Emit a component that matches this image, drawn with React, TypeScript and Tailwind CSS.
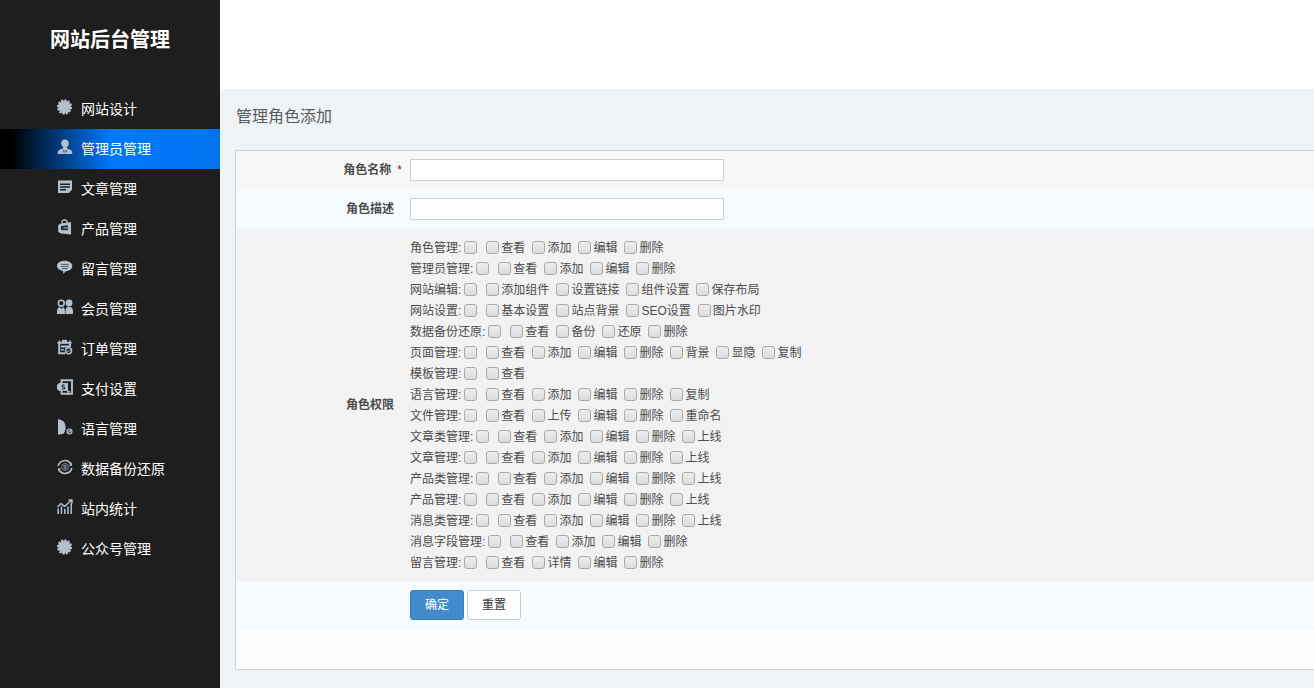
import type { ReactNode } from "react";

const menu = [
  { name: "网站设计", icon: "badge" },
  { name: "管理员管理", icon: "admin", active: true },
  { name: "文章管理", icon: "article" },
  { name: "产品管理", icon: "bag" },
  { name: "留言管理", icon: "message" },
  { name: "会员管理", icon: "members" },
  { name: "订单管理", icon: "order" },
  { name: "支付设置", icon: "pay" },
  { name: "语言管理", icon: "language" },
  { name: "数据备份还原", icon: "backup" },
  { name: "站内统计", icon: "stats" },
  { name: "公众号管理", icon: "badge" },
];

const permissions = [
  { name: "角色管理", items: ["查看", "添加", "编辑", "删除"] },
  { name: "管理员管理", items: ["查看", "添加", "编辑", "删除"] },
  { name: "网站编辑", items: ["添加组件", "设置链接", "组件设置", "保存布局"] },
  { name: "网站设置", items: ["基本设置", "站点背景", "SEO设置", "图片水印"] },
  { name: "数据备份还原", items: ["查看", "备份", "还原", "删除"] },
  { name: "页面管理", items: ["查看", "添加", "编辑", "删除", "背景", "显隐", "复制"] },
  { name: "模板管理", items: ["查看"] },
  { name: "语言管理", items: ["查看", "添加", "编辑", "删除", "复制"] },
  { name: "文件管理", items: ["查看", "上传", "编辑", "删除", "重命名"] },
  { name: "文章类管理", items: ["查看", "添加", "编辑", "删除", "上线"] },
  { name: "文章管理", items: ["查看", "添加", "编辑", "删除", "上线"] },
  { name: "产品类管理", items: ["查看", "添加", "编辑", "删除", "上线"] },
  { name: "产品管理", items: ["查看", "添加", "编辑", "删除", "上线"] },
  { name: "消息类管理", items: ["查看", "添加", "编辑", "删除", "上线"] },
  { name: "消息字段管理", items: ["查看", "添加", "编辑", "删除"] },
  { name: "留言管理", items: ["查看", "详情", "编辑", "删除"] },
];

const icons: Record<string, ReactNode> = {
  badge: (
    <>
      <circle cx="7.5" cy="8" r="6.5" fill="currentColor" />
      <circle cx="7.5" cy="8" r="6.8" fill="none" stroke="currentColor" strokeWidth="1.8" pathLength="24" strokeDasharray="1.2 0.8" />
    </>
  ),
  admin: (
    <>
      <path fill="currentColor" d="M8 .5c2.200 0 3.800 1.500 3.800 3.800 0 1.600-.8 3-2 3.800l.4 1.400c1.300.7 4.500 1.200 4.900 3.200.2.800.2 1.500.2 2.300H.7c0-.8 0-1.500.2-2.300.4-2 3.600-2.500 4.900-3.200l.4-1.400c-1.200-.8-2-2.200-2-3.800C4.200 2 5.800.5 8 .5z" />
      <path fill="#0a60bd" d="m5.600 10.200 2.100 1.600-.6 2.800zM10.400 10.200l-2.100 1.600.6 2.800z" />
    </>
  ),
  article: (
    <>
      <path fill="currentColor" d="M1 1.500h14v9.300l-3.200 3.200H1z" />
      <path stroke="#1e1e1e" strokeWidth="1.400" d="M3 5.200h10M3 8h10M3 10.800h6" />
    </>
  ),
  bag: (
    <>
      <path fill="none" stroke="currentColor" strokeWidth="1.300" d="M5 5V3q0-2 2.500-2T10 3v1.500" />
      <path fill="currentColor" d="M1.200 6 4 4.500l10-1.500v12.500L4 14.500l-2.800-1.500z" />
      <path fill="#1e2a35" d="M4 7 11 6.300v5L4 11z" />
      <path fill="#65737f" d="M6.500 8H11v2H6.500z" />
    </>
  ),
  message: (
    <>
      <path fill="currentColor" d="M7.500 1.800C11.800 1.800 15.300 4 15.300 7s-3 5-6.500 5.300L6.200 15v-3C2.800 11.500 0 9.600 0 7c0-3 3.200-5.200 7.500-5.200z" />
      <path stroke="#5b656e" strokeWidth="1" d="M4 5.500h7.500M4 7.500h7.500M5 9.500h5.500" />
    </>
  ),
  members: (
    <>
      <circle cx="4.300" cy="4.200" r="2.900" fill="none" stroke="currentColor" strokeWidth="1.600" />
      <circle cx="12" cy="4" r="3.400" fill="currentColor" />
      <path fill="currentColor" d="M0 15c0-4 0-5.800 2.700-7l1.600 2L6 8c2 .8 2 3.500 2 7zM8.500 15c0-4 0-6 1.800-7h3.400C16 9 16 11.500 16 15z" />
    </>
  ),
  order: (
    <>
      <path fill="none" stroke="currentColor" strokeWidth="2" d="M.5 3.800h14M2.200 4v10.200H8M13 4v4M4 7.500h8" />
      <path stroke="currentColor" strokeWidth="1.400" d="M4 10.800h3" />
      <path fill="currentColor" d="M5 .8h5v3.700H5z" />
      <path stroke="currentColor" strokeWidth="1.500" d="M2.500 1.500v3M12.800 1.500v3" />
      <circle cx="11.500" cy="11.800" r="3" fill="#1e1e1e" stroke="currentColor" strokeWidth="1.500" />
      <path fill="none" stroke="currentColor" d="m10 11.800 1 1 1.800-2" />
    </>
  ),
  pay: (
    <>
      <path fill="none" stroke="currentColor" strokeWidth="1.900" d="M4.500 4V1.200h10.500v13.600H4.500V12" />
      <path fill="currentColor" d="M2 4h9v8H2L0 10V6z" />
      <path fill="none" stroke="#1e1e1e" strokeWidth="1" d="M7.500 6H5.200v2h2.300v2H5" />
      <path stroke="currentColor" strokeWidth="1.500" d="M10 12.800h3" />
    </>
  ),
  language: (
    <>
      <path fill="currentColor" d="M1 0c5 .8 7.500 3.500 7.500 8 0 3.500-1 5.500-2 6.800L1 15.800z" />
      <circle cx="12.500" cy="12.500" r="2.500" fill="#4b545c" stroke="currentColor" strokeWidth="1.100" />
      <path stroke="currentColor" d="m11 13.500 3-2" />
    </>
  ),
  backup: (
    <>
      <path fill="none" stroke="currentColor" strokeWidth="1.600" d="M1.200 7A6.900 6.700 0 0 1 13.800 4.700M14.800 9A6.900 6.700 0 0 1 2.200 11.300" />
      <path fill="currentColor" d="M15 3.500v3.200h-3.200zM1 12.500V9.300h3.200z" />
      <circle cx="8" cy="8" r="3.500" fill="none" stroke="#77828b" strokeWidth="1" />
      <path fill="none" stroke="#84909a" strokeWidth="1.200" d="M9.500 6.500H7V8h2v1.700H6.500" />
    </>
  ),
  stats: (
    <>
      <path fill="none" stroke="currentColor" strokeWidth="1.400" d="M.5 8 4 4.500l3.500 3 7-6.500M11.500 1H15v3.500" />
      <path stroke="currentColor" strokeWidth="1.500" d="M1.200 15V9.500M4.500 15V7.500M7.800 15v-5M11 15V7.500M14.200 15V4" />
    </>
  ),
};

const boxStyle =
  "size-[13px] shrink-0 appearance-none rounded-[3px] border border-[#a9a9a9] bg-linear-to-b from-[#eeeeee] to-[#dcdcdc] checked:bg-[#428bca] checked:bg-none";

function Sidebar() {
  return (
    <aside className="w-[220px] shrink-0 bg-[#1e1e1e] text-white">
      <h1 className="flex h-[89px] items-center justify-center pb-2.5 text-xl font-bold">网站后台管理</h1>
      <nav>
        {menu.map((item) => (
          <a
            key={item.name}
            href="#"
            className={
              "flex h-10 items-center gap-2 pl-[57px] text-sm " +
              (item.active ? "bg-linear-to-r/srgb from-black from-5% via-[#0078fb] via-50% to-[#0072ee]" : "")
            }
          >
            <svg viewBox="0 0 16 16" className="mb-1 size-4 text-[#b4c1cc]" aria-hidden="true">
              {icons[item.icon]}
            </svg>
            {item.name}
          </a>
        ))}
      </nav>
    </aside>
  );
}

function TextRow({ id, label, required, color }: { id: string; label: string; required?: boolean; color: string }) {
  return (
    <div className={"flex items-center border-b border-[#f8f8f8] py-2 " + color}>
      <label htmlFor={id} className={"w-[166px] text-right font-bold " + (required ? "" : "pr-2")}>
        {label}
        {required && <span className="pl-1.5 font-normal text-[#c00000]">*</span>}
      </label>
      <input id={id} type="text" className="ml-2 h-[22px] w-[314px] border border-[#c8d1d8] bg-white px-1 outline-none" />
    </div>
  );
}

function App() {
  return (
    <div className="flex min-h-screen bg-[#eff3f6] font-['Liberation_Sans','Noto_Sans_CJK_SC',sans-serif]">
      <Sidebar />
      <main className="min-w-0 flex-1">
        <div className="h-[89px] bg-white"></div>
        <h2 className="mb-[5px] pl-4 text-base leading-14 text-[#5a5a5a]">管理角色添加</h2>
        <form className="mb-[18px] ml-[15px] border-y border-l border-[#ccd3d9] bg-[#fdfdfd] pb-10 text-xs text-[#4c4c4c]">
          <TextRow id="role-name" label="角色名称" required color="bg-[#f7f7f7]" />
          <TextRow id="role-desc" label="角色描述" color="bg-[#f6fbff]" />
          <div role="group" aria-labelledby="role-perm" className="flex items-center border-b border-[#f5f7f8] bg-[#f2f2f2] py-2">
            <div id="role-perm" className="w-[166px] shrink-0 pr-2 text-right font-bold">
              角色权限
            </div>
            <div className="ml-2">
              {permissions.map((group) => (
                <div key={group.name} className="flex h-[21px] items-center gap-[7px] whitespace-nowrap">
                  <label className="mr-0.5 flex items-center gap-[3px]">
                    {group.name}:
                    <input type="checkbox" className={boxStyle} />
                  </label>
                  {group.items.map((item) => (
                    <label key={item} className="flex items-center gap-0.5">
                      <input type="checkbox" className={boxStyle} />
                      {item}
                    </label>
                  ))}
                </div>
              ))}
            </div>
          </div>
          <div className="flex gap-[3px] border-b border-[#f2f4f5] bg-[#f6fbff] py-2 pl-[174px]">
            <button type="submit" className="h-[30px] w-[54px] rounded-[3px] border border-[#357ebd] bg-[#428bca] text-white">
              确定
            </button>
            <button type="reset" className="h-[30px] w-[54px] rounded-[3px] border border-[#cccccc] bg-white text-[#333333]">
              重置
            </button>
          </div>
        </form>
      </main>
    </div>
  );
}

export default App;
